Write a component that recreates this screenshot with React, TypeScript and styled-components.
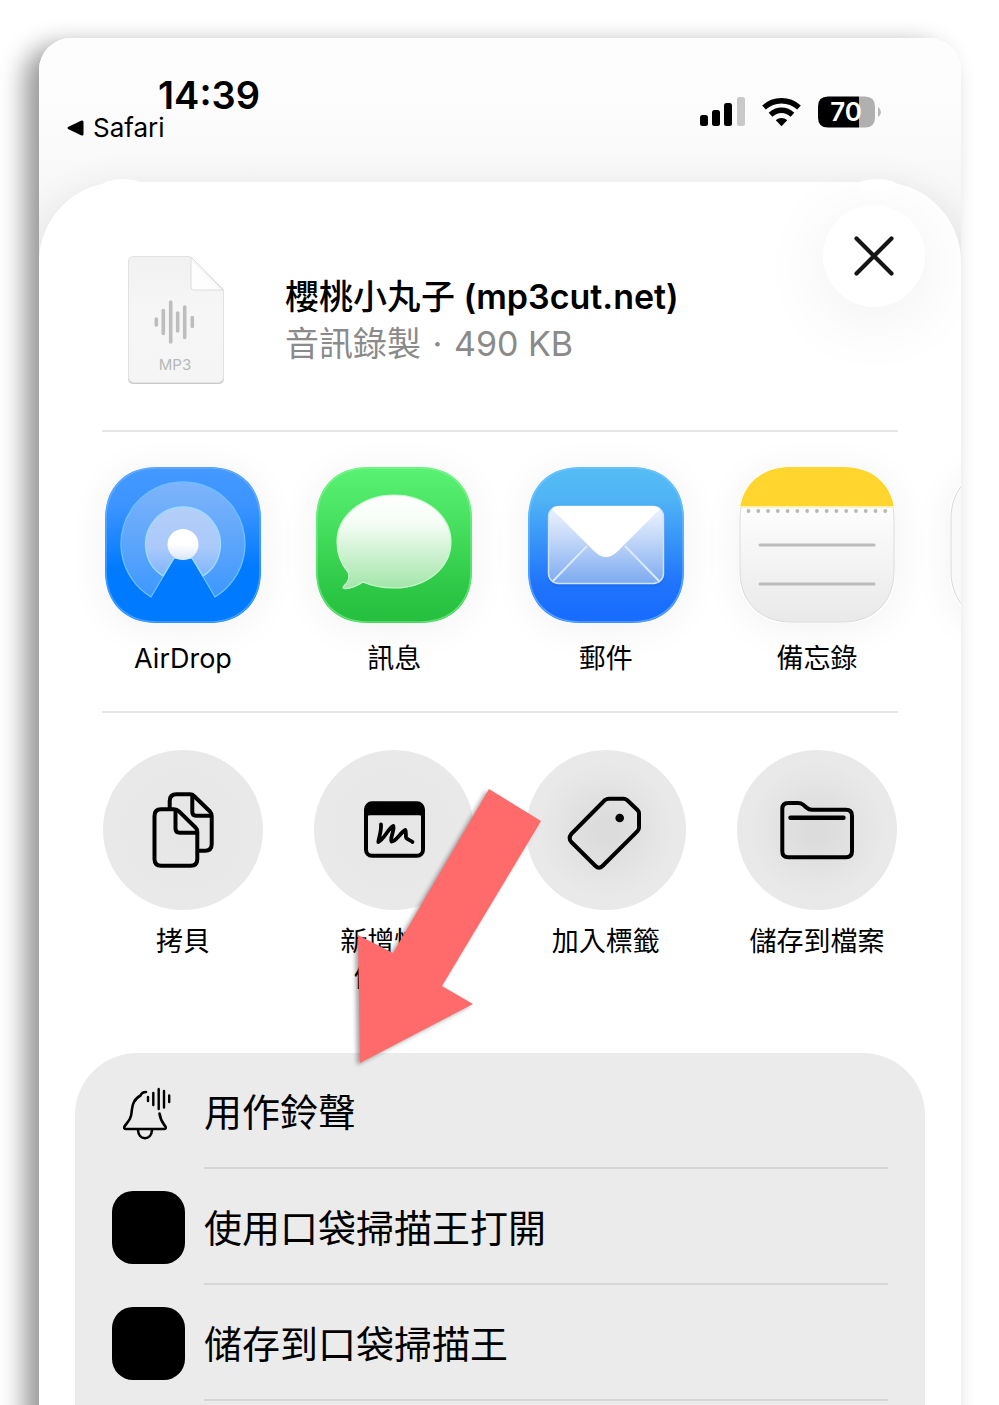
import React from 'react';
import styled, { createGlobalStyle } from 'styled-components';

const GlobalStyle = createGlobalStyle`
  * { box-sizing: border-box; }
  body {
    margin: 0;
    background: #fff;
    color: #000;
    font-family: Inter, "Noto Sans CJK TC", sans-serif;
  }
  button {
    margin: 0;
    padding: 0;
    border: 0;
    background: none;
    color: inherit;
    font: inherit;
    cursor: pointer;
  }
  svg { display: block; flex: none; }
`;

const Page = styled.div`
  display: flex;
  flex-direction: column;
  min-height: 100vh;
  padding: 38px 38px 0 39px;
  overflow: clip;
`;

const Phone = styled.main`
  flex: 1;
  display: flex;
  flex-direction: column;
  margin-bottom: -80px;
  border-radius: 32px 32px 0 0;
  background: linear-gradient(#fdfdfd 0, #fcfcfc 70px, #f8f8f8 144px, #f0f0f0 220px);
  box-shadow: -14px 8px 26px rgba(0, 0, 0, 0.42);
  overflow: clip;
`;

const StatusBar = styled.header`
  display: flex;
  justify-content: space-between;
  height: 144px;
  padding: 36px 80px 0 28px;
`;

const Clock = styled.time`
  display: block;
  margin-left: 91px;
  font-size: 38px;
  font-weight: 600;
  line-height: 42px;
`;

const BackLink = styled.a`
  display: flex;
  align-items: center;
  gap: 9px;
  color: inherit;
  font-size: 26px;
  line-height: 24px;
  text-decoration: none;
`;

const Indicators = styled.div`
  display: flex;
  align-items: center;
  gap: 17px;
  height: 76px;
`;

const Sheet = styled.section`
  position: relative;
  flex: 1;
  padding-top: 23px;
  border-radius: 80px 80px 0 0;
  background: #fff;
  box-shadow: 0 0 36px rgba(0, 0, 0, 0.06);

  &::before,
  &::after {
    content: "";
    position: absolute;
    top: -3px;
    width: 40px;
    height: 12px;
    border-radius: 50%;
    background: #fff;
  }
  &::before { left: 64px; }
  &::after { right: 64px; }
`;

const FileHeader = styled.div`
  display: flex;
  align-items: flex-start;
  justify-content: space-between;
  height: 225px;
  padding: 0 36px 0 89px;
`;

const FileInfo = styled.div`
  display: flex;
  align-items: center;
  gap: 61px;
  margin-top: 51px;
`;

const FileName = styled.h1`
  margin: 0;
  font-size: 34px;
  font-weight: 600;
  line-height: 48px;
`;

const Title = styled.span`
  font-weight: 500;
`;

const FileMeta = styled.p`
  margin: 0;
  color: #8a8a8a;
  font-size: 34px;
  line-height: 46px;
`;

const Dot = styled.span`
  margin: 0 2px;
`;

const CloseButton = styled.button`
  display: grid;
  place-items: center;
  width: 102px;
  height: 102px;
  border-radius: 50%;
  background: #fff;
  box-shadow: 0 12px 72px rgba(0, 0, 0, 0.07);
`;

const Divider = styled.hr`
  height: 2px;
  margin: 0 63px;
  border: 0;
  background: #e5e5e5;
`;

const ShareRow = styled.div<{ $top: number; $bottom: number }>`
  display: grid;
  grid-auto-flow: column;
  grid-auto-columns: 160px;
  column-gap: calc((100% - 640px) / 3);
  padding: ${(p) => p.$top}px 64px ${(p) => p.$bottom}px;
`;

const ShareItem = styled.div`
  position: relative;
`;

const ShareButton = styled.button<{ $gap: number }>`
  display: flex;
  flex-direction: column;
  align-items: center;
  gap: ${(p) => p.$gap}px;
  width: 100%;
  font-size: 27px;
  line-height: 36px;
  white-space: pre-line;
`;

const AppTile = styled.span`
  width: 156px;
  height: 156px;
  border-radius: 46px;
  box-shadow: 0 4px 40px rgba(0, 0, 0, 0.06);
`;

const ActionCircle = styled.span<{ $core: string }>`
  width: 160px;
  height: 160px;
  border-radius: 50%;
  background: radial-gradient(circle, ${(p) => p.$core} 10%, #e9e9e9 60%);
`;

const Arrow = styled.svg`
  position: absolute;
  top: 38px;
  left: 42px;
  z-index: 2;
  overflow: visible;
  pointer-events: none;
  filter: drop-shadow(-3px 2px 2px rgba(0, 0, 0, 0.35));
`;

const OptionList = styled.ul`
  margin: 0 36px;
  padding: 0 0 80px;
  border-radius: 62px 62px 0 0;
  background: #ebebeb;
  list-style: none;
`;

const Option = styled.button`
  display: flex;
  align-items: center;
  gap: 19px;
  width: 100%;
  height: 116px;
  padding: 0 37px;
  text-align: left;
`;

const OptionIcon = styled.span<{ $solid?: boolean }>`
  flex: none;
  width: 73px;
  height: 73px;
  border-radius: 21px;
  background: ${(p) => (p.$solid ? '#000' : 'transparent')};
`;

const OptionLabel = styled.span`
  flex: 1;
  align-self: stretch;
  border-bottom: 2px solid #d6d6d6;
  font-size: 38px;
  line-height: 118px;
`;

const SQUIRCLE =
  'M0 52C0 20 20 0 52 0H104C136 0 156 20 156 52V104C156 136 136 156 104 156H52C20 156 0 136 0 104Z';
const SQUIRCLE_EDGE =
  'M1 52C1 21 21 1 52 1H104C135 1 155 21 155 52V104C155 135 135 155 104 155H52C21 155 1 135 1 104Z';

type Stop = [string, string];

const Gradient = ({ id, stops }: { id: string; stops: Stop[] }) => (
  <linearGradient id={id} x1="0" y1="0" x2="0" y2="1">
    {stops.map(([offset, color]) => (
      <stop key={offset} offset={offset} stopColor={color} />
    ))}
  </linearGradient>
);

const AirDropIcon = () => (
  <svg width="156" height="156" viewBox="0 0 156 156" aria-hidden="true">
    <defs>
      <Gradient id="ad-bg" stops={[['0', '#4599ff'], ['0.25', '#3c94ff'], ['0.65', '#007aff'], ['1', '#007aff']]} />
      <Gradient id="ad-outer" stops={[['0', '#7fb4fb'], ['0.5', '#5ea6fb'], ['1', '#3d97ff']]} />
      <Gradient id="ad-mid" stops={[['0', '#b5cff8'], ['0.6', '#a9c9fa'], ['1', '#7fb5fc']]} />
      <Gradient id="ad-dot" stops={[['0', '#ffffff'], ['0.5', '#ffffff'], ['1', '#dbe6fb']]} />
    </defs>
    <path d={SQUIRCLE} fill="url(#ad-bg)" />
    <path d={SQUIRCLE_EDGE} fill="none" stroke="#6fb8ff" strokeOpacity="0.6" strokeWidth="1.5" />
    <path d="M46 130A62 62 0 1 1 110 130L87 91H69Z" fill="url(#ad-outer)" stroke="#6cc0ff" strokeWidth="1.3" strokeLinejoin="round" />
    <path d="M58 109A37.500 37.500 0 1 1 98 109L87 91H69Z" fill="url(#ad-mid)" stroke="#9bdcff" strokeWidth="1.3" strokeLinejoin="round" />
    <circle cx="78" cy="77.500" r="15.500" fill="url(#ad-dot)" />
  </svg>
);

const MessagesIcon = () => (
  <svg width="156" height="156" viewBox="0 0 156 156" aria-hidden="true">
    <defs>
      <Gradient id="ms-bg" stops={[['0', '#5af274'], ['0.3', '#4be363'], ['0.8', '#2cc744'], ['1', '#25bf3e']]} />
      <Gradient id="ms-bubble" stops={[['0', '#ffffff'], ['0.3', '#f5fdf5'], ['0.7', '#c5efc9'], ['1', '#a3e5aa']]} />
    </defs>
    <path d={SQUIRCLE} fill="url(#ms-bg)" />
    <path d={SQUIRCLE_EDGE} fill="none" stroke="#85f596" strokeOpacity="0.6" strokeWidth="1.500" />
    <path
      d="M78 28C110 28 135 49 135 75C135 101 110 121 78 121C67 121 56 119 47 115C41 119 34 122 28 121.500C26.500 121 27 120 28 119C33 114 34 110 32 105C25 97 21 87 21 75C21 49 46 28 78 28Z"
      fill="url(#ms-bubble)"
      stroke="#c9fad0"
      strokeWidth="1.200"
    />
  </svg>
);

const MailIcon = () => (
  <svg width="156" height="156" viewBox="0 0 156 156" aria-hidden="true">
    <defs>
      <Gradient id="ml-bg" stops={[['0', '#55bdf5'], ['0.2', '#50b4f5'], ['0.75', '#1f74fb'], ['1', '#176bff']]} />
      <Gradient id="ml-env" stops={[['0', '#eff4fe'], ['0.4', '#c5d9f9'], ['1', '#7daaf0']]} />
    </defs>
    <path d={SQUIRCLE} fill="url(#ml-bg)" />
    <path d={SQUIRCLE_EDGE} fill="none" stroke="#7cc6ff" strokeOpacity="0.6" strokeWidth="1.500" />
    <rect x="19" y="40" width="118" height="80" rx="12" fill="#1455c8" opacity="0.18" />
    <rect x="20.500" y="39.500" width="115" height="77" rx="10" fill="url(#ml-env)" stroke="#cfe3ff" strokeWidth="1.500" />
    <path d="M59 79L25 114M97 79L131 114" stroke="#dcebff" strokeWidth="1.800" />
    <path d="M24 42Q27 39 32 39H124Q129 39 132 42L90 84Q78 96 66 84Z" fill="#fff" />
  </svg>
);

const NotesIcon = () => (
  <svg width="156" height="156" viewBox="0 0 156 156" aria-hidden="true">
    <defs>
      <Gradient id="nt-bg" stops={[['0', '#ffffff'], ['0.3', '#fcfcfc'], ['1', '#e9e9e9']]} />
      <clipPath id="nt-clip">
        <path d={SQUIRCLE} />
      </clipPath>
    </defs>
    <path d={SQUIRCLE_EDGE} fill="url(#nt-bg)" stroke="#dadada" strokeWidth="1" />
    <g clipPath="url(#nt-clip)">
      <rect x="1" width="154" height="39" fill="#ffd52e" />
      <rect x="1" y="39" width="154" height="2" fill="#fff2bd" />
    </g>
    {Array.from({ length: 15 }, (_, i) => (
      <circle key={i} cx={9.5 + i * 9.77} cy="44" r="1.900" fill="#b9b9ae" />
    ))}
    <path d="M21 78H135M21 117H135" stroke="#bcbcbc" strokeWidth="3" strokeLinecap="round" />
  </svg>
);

const BlankAppIcon = () => (
  <svg width="156" height="156" viewBox="0 0 156 156" aria-hidden="true">
    <path d={SQUIRCLE_EDGE} fill="#f9f9f9" stroke="#dadada" strokeWidth="1" />
  </svg>
);

const ActionIcon = ({ children }: { children: React.ReactNode }) => (
  <svg
    width="160"
    height="160"
    viewBox="0 0 160 160"
    fill="none"
    stroke="#000"
    strokeWidth="4"
    strokeLinejoin="round"
    strokeLinecap="round"
    aria-hidden="true"
  >
    {children}
  </svg>
);

const CopyIcon = () => (
  <ActionIcon>
    <path strokeLinecap="butt" d="M66.700 59V51Q66.700 44.300 73.400 44.300H87Q89.500 44.300 91 46L107 61.500Q108.700 63.300 108.700 66V94Q108.700 100.700 102 100.700H95" />
    <path d="M89.300 45V62Q89.300 65.700 93 65.700H108" />
    <path d="M58 59.300H71Q74 59.300 76 61.300L92.500 77.500Q94.300 79.300 94.300 82V109Q94.300 115.700 87.600 115.700H58.200Q51.500 115.700 51.500 109V66Q51.500 59.300 58 59.300Z" />
    <path d="M72.500 60V78.500Q72.500 82.700 76.700 82.700H94" />
  </ActionIcon>
);

const QuickNoteIcon = () => (
  <ActionIcon>
    <rect x="52" y="53.300" width="57" height="52.500" rx="6" />
    <path d="M52 58Q52 53 58 53H103Q109 53 109 58V67Q108 65.300 105 65.300H56Q53 65.300 52 67Z" fill="#000" stroke="none" />
    <path d="M52 56H109V63H52Z" fill="#000" stroke="none" />
    <path strokeWidth="3.800" d="M67 74.500C67.500 81 65 87 64.300 92C70 89.500 74 78.500 79.300 76C81 79.500 75.500 89 77.500 91.500C82 91.500 86 83 91.300 80C93 82.500 91 86 92.300 88C94 90 96 90 98.500 92" />
  </ActionIcon>
);

const TagIcon = () => (
  <ActionIcon>
    <path d="M79 50Q80.700 48.700 83 48.700H97.500Q99.500 48.700 101 50L111.500 60Q113 61.500 113 63.500V77.500Q113 79.700 111.500 81.200L76.500 116Q73 119.500 69.500 116L45.300 92Q42 88.500 45.300 84Z" />
    <circle cx="93.700" cy="68" r="4.300" fill="#000" stroke="none" />
  </ActionIcon>
);

const FolderIcon = () => (
  <ActionIcon>
    <path d="M45.300 59Q45.300 53 51.300 53H61Q64 53 66.200 54.800L69.500 57.600Q72 59.700 75 59.700H109Q115 59.700 115 65.700V101.300Q115 107.300 109 107.300H51.300Q45.300 107.300 45.300 101.300Z" />
    <path d="M53.500 67.700H106.500" strokeWidth="4.400" />
  </ActionIcon>
);

const BellIcon = () => (
  <svg width="73" height="73" viewBox="0 -2 73 73" fill="none" stroke="#000" strokeWidth="2.600" strokeLinecap="round" strokeLinejoin="round" aria-hidden="true">
    <path d="M34 15C31 15 29.500 16 28.500 18.500C22 22 20.300 27 19.500 36C19 43 15 45.500 12.500 49.500Q11.500 52 14 52H52Q54.500 52 53.500 49.500C51 46 48.500 44 47.500 36.500" />
    <path d="M26 53C26.500 64 39.500 64 40 53" />
    <path d="M36 20V24M41.300 16V28M46.700 12V32M52 14V30.500M57.200 18.500V25" strokeWidth="2.400" />
  </svg>
);

const FileIcon = () => (
  <svg width="96" height="128" viewBox="0 0 96 128" overflow="visible" aria-hidden="true">
    <defs>
      <Gradient id="file-bg" stops={[['0', '#f1f1f1'], ['0.4', '#f6f6f6'], ['1', '#f5f5f5']]} />
      <linearGradient id="file-fold" x1="0" y1="1" x2="0.600" y2="0.400">
        <stop offset="0" stopColor="#ffffff" />
        <stop offset="0.700" stopColor="#fdfdfd" />
        <stop offset="1" stopColor="#ededed" />
      </linearGradient>
    </defs>
    <path d="M6 1.500H63L96 34V122Q96 128 90 128H6Q0 128 0 122V7Q0 1.500 6 1.500Z" fill="#c9c9c9" />
    <path d="M6 0.500H62L95.500 34V120.500Q95.500 126.500 89.500 126.500H6.500Q0.500 126.500 0.500 120.500V6Q0.500 0.500 6 0.500Z" fill="url(#file-bg)" stroke="#e2e2e2" />
    <path d="M63 1V31Q63 34 66 34H95Z" fill="url(#file-fold)" stroke="#dcdcdc" />
    <path
      d="M28.300 63V69M35.300 54.500V77.500M42.700 46V86M49.700 57V75M56.700 51V81.500M64.300 61.500V70.500"
      stroke="#bdbdbd"
      strokeWidth="3.600"
      strokeLinecap="round"
    />
    <text x="47" y="114" textAnchor="middle" fontSize="15" fill="#b8b8b8">MP3</text>
  </svg>
);

const SignalIcon = () => (
  <svg width="45" height="30" viewBox="0 0 45 30" role="img" aria-label="Signal">
    <rect x="0" y="18" width="8" height="11" rx="2.500" />
    <rect x="12" y="13" width="8" height="16" rx="2.500" />
    <rect x="24" y="6" width="8" height="23" rx="2.500" />
    <rect x="37" y="0" width="8" height="29" rx="2.500" fill="#c9c9c9" />
  </svg>
);

const WifiIcon = () => (
  <svg width="39" height="29" viewBox="0 0 39 29" fill="none" stroke="#000" strokeWidth="5.400" role="img" aria-label="Wi-Fi">
    <path d="M2 9.500C12 0.500 27 0.500 37 9.500" />
    <path d="M8.500 16.700C15 10.700 24 10.700 30.500 16.700" />
    <path d="M13.800 22.300C17 19.300 22 19.300 25.200 22.300L19.500 28.300Z" fill="#000" stroke="none" />
  </svg>
);

const BatteryIcon = () => (
  <svg width="63" height="32" viewBox="0 0 63 32" role="img" aria-label="Battery 70%">
    <path d="M10 0.500H41V31.500H10Q0 31.500 0 21.500V10.500Q0 0.500 10 0.500Z" />
    <path d="M41 0.500H47Q57 0.500 57 10.500V21.500Q57 31.500 47 31.500H41Z" fill="#b0b0b0" />
    <path d="M60 11Q63 13 63 16T60 21Z" fill="#b8b8b8" />
    <text x="28" y="25" textAnchor="middle" fontSize="26" fontWeight="600" fill="#fff">70</text>
  </svg>
);

const apps = [
  { label: 'AirDrop', Icon: AirDropIcon },
  { label: '訊息', Icon: MessagesIcon },
  { label: '郵件', Icon: MailIcon },
  { label: '備忘錄', Icon: NotesIcon },
  { label: '', Icon: BlankAppIcon },
];

const actions = [
  { label: '拷貝', Icon: CopyIcon, core: '#e6e6e6' },
  { label: '新增快速\n備忘錄', Icon: QuickNoteIcon, core: '#e6e6e6', pointed: true },
  { label: '加入標籤', Icon: TagIcon, core: '#dcdcdc' },
  { label: '儲存到檔案', Icon: FolderIcon, core: '#dcdcdc' },
];

const options = [
  { label: '用作鈴聲', bell: true },
  { label: '使用口袋掃描王打開' },
  { label: '储存到口袋掃描王' },
];

export default function App() {
  return (
    <>
      <GlobalStyle />
      <Page lang="zh-Hant">
        <Phone>
          <StatusBar>
            <div>
              <Clock>14:39</Clock>
              <BackLink href="#safari">
                <svg width="17" height="16" viewBox="0 0 17 16" aria-hidden="true">
                  <path d="M1.500 6.800L14.500 0.600Q16.500 0 16.500 2V14Q16.500 16 14.500 15.400L1.500 9.200Q-0.500 8 1.500 6.800Z" />
                </svg>
                Safari
              </BackLink>
            </div>
            <Indicators>
              <SignalIcon />
              <WifiIcon />
              <BatteryIcon />
            </Indicators>
          </StatusBar>

          <Sheet>
            <FileHeader>
              <FileInfo>
                <FileIcon />
                <div>
                  <FileName>
                    <Title>櫻桃小丸子</Title> (mp3cut.net)
                  </FileName>
                  <FileMeta>
                    音訊錄製 <Dot>·</Dot> 490 KB
                  </FileMeta>
                </div>
              </FileInfo>
              <CloseButton aria-label="Close">
                <svg width="40" height="40" viewBox="0 0 40 40" fill="none" stroke="#151515" strokeWidth="4.200" strokeLinecap="round" aria-hidden="true">
                  <path d="M2.500 2.500L37.500 37.500M37.500 2.500L2.500 37.500" />
                </svg>
              </CloseButton>
            </FileHeader>

            <Divider />
            <ShareRow $top={35} $bottom={34}>
              {apps.map(({ label, Icon }) => (
                <ShareItem key={label}>
                  <ShareButton $gap={18} aria-label={label || 'More'}>
                    <AppTile>
                      <Icon />
                    </AppTile>
                    {label}
                  </ShareButton>
                </ShareItem>
              ))}
            </ShareRow>

            <Divider />
            <ShareRow $top={37} $bottom={57}>
              {actions.map(({ label, Icon, core, pointed }) => (
                <ShareItem key={label}>
                  <ShareButton $gap={14}>
                    <ActionCircle $core={core}>
                      <Icon />
                    </ActionCircle>
                    <span>{label}</span>
                  </ShareButton>
                  {pointed && (
                    <Arrow width="186" height="276" viewBox="0 0 186 276" aria-hidden="true">
                      <path d="M133 1L185 33L86 198L117 216L4 275L2 147L37 165Z" fill="#ff6b6b" />
                    </Arrow>
                  )}
                </ShareItem>
              ))}
            </ShareRow>

            <OptionList>
              {options.map(({ label, bell }) => (
                <li key={label}>
                  <Option>
                    <OptionIcon $solid={!bell}>{bell && <BellIcon />}</OptionIcon>
                    <OptionLabel>{label}</OptionLabel>
                  </Option>
                </li>
              ))}
            </OptionList>
          </Sheet>
        </Phone>
      </Page>
    </>
  );
}
